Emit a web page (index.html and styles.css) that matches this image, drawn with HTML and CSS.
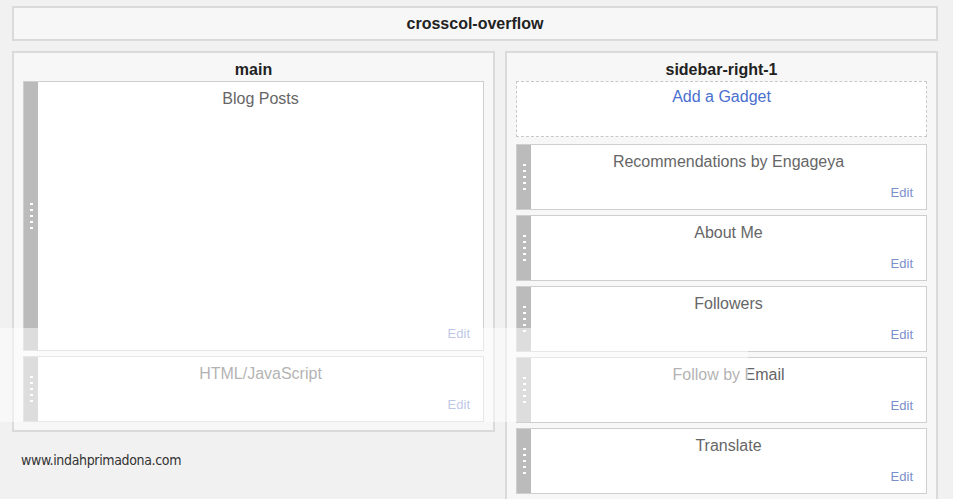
FILE: index.html
```html
<!DOCTYPE html>
<html>
<head>
<meta charset="utf-8">
<link rel="stylesheet" href="styles.css">
</head>
<body>
<div class="page">
  <div class="crosscol">crosscol-overflow</div>
  <div class="columns">
    <div class="col main-col">
      <div class="col-title">main</div>
      <div class="widgets">
        <div class="widget blog">
          <div class="handle"><span></span><span></span><span></span><span></span><span></span></div>
          <div class="body"><div class="wtitle">Blog Posts</div><div class="edit">Edit</div></div>
        </div>
        <div class="widget">
          <div class="handle"><span></span><span></span><span></span><span></span><span></span></div>
          <div class="body"><div class="wtitle">HTML/JavaScript</div><div class="edit">Edit</div></div>
        </div>
      </div>
      <div class="site">www.indahprimadona.com</div>
    </div>
    <div class="col side-col">
      <div class="col-title">sidebar-right-1</div>
      <div class="widgets">
        <div class="add">Add a Gadget</div>
        <div class="widget">
          <div class="handle"><span></span><span></span><span></span><span></span><span></span></div>
          <div class="body"><div class="wtitle">Recommendations by Engageya</div><div class="edit">Edit</div></div>
        </div>
        <div class="widget">
          <div class="handle"><span></span><span></span><span></span><span></span><span></span></div>
          <div class="body"><div class="wtitle">About Me</div><div class="edit">Edit</div></div>
        </div>
        <div class="widget">
          <div class="handle"><span></span><span></span><span></span><span></span><span></span></div>
          <div class="body"><div class="wtitle">Followers</div><div class="edit">Edit</div></div>
        </div>
        <div class="widget">
          <div class="handle"><span></span><span></span><span></span><span></span><span></span></div>
          <div class="body"><div class="wtitle">Follow by Email</div><div class="edit">Edit</div></div>
        </div>
        <div class="widget">
          <div class="handle"><span></span><span></span><span></span><span></span><span></span></div>
          <div class="body"><div class="wtitle">Translate</div><div class="edit">Edit</div></div>
        </div>
      </div>
    </div>
  </div>
  <div class="veil"></div>
</div>
</body>
</html>
```

FILE: styles.css
```css
html, body {
  margin: 0;
  padding: 0;
  background: #f1f1f1;
  font-family: "Liberation Sans", Arial, sans-serif;
  overflow: hidden;
}
.page {
  position: relative;
  width: 953px;
  height: 499px;
  padding: 6px 0 0 12px;
  box-sizing: border-box;
}
.crosscol {
  width: 926px;
  height: 35px;
  box-sizing: border-box;
  border: 2px solid #dadada;
  background: #f7f7f7;
  font-weight: bold;
  font-size: 16px;
  color: #222;
  text-align: center;
  line-height: 31px;
}
.columns {
  display: flex;
  gap: 10px;
  margin-top: 10px;
  align-items: flex-start;
}
.col {
  box-sizing: border-box;
  border: 2px solid #dadada;
  background: #f7f7f7;
}
.main-col {
  width: 483px;
  height: 381px;
  padding: 0 9px 10px;
  position: relative;
}
.side-col {
  width: 433px;
  height: 470px;
  padding: 0 9px;
}
.col-title {
  height: 28px;
  line-height: 34px;
  text-align: center;
  font-weight: bold;
  font-size: 16px;
  color: #222;
}
.widgets {
  display: flex;
  flex-direction: column;
  gap: 5px;
}
.widget {
  display: flex;
  height: 66px;
  box-sizing: border-box;
  border: 1px solid #cfcfcf;
  background: #fff;
}
.widget.blog {
  height: 270px;
}
.handle {
  width: 14px;
  background: #bbbbbb;
  display: flex;
  flex-direction: column;
  align-items: center;
  justify-content: center;
  gap: 4px;
}
.handle span {
  width: 3px;
  height: 2px;
  background: #fff;
}
.body {
  flex: 1;
  display: flex;
  flex-direction: column;
  justify-content: space-between;
  padding: 8px 13px 8px 0;
}
.wtitle {
  text-align: center;
  font-size: 16px;
  line-height: 18px;
  color: #666;
  padding-left: 13px;
}
.edit {
  text-align: right;
  font-size: 13px;
  line-height: 16px;
  color: #7a90cb;
}
.add {
  height: 56px;
  box-sizing: border-box;
  border: 1px dashed #c8c8c8;
  background: #fff;
  text-align: center;
  font-size: 16px;
  line-height: 18px;
  padding-top: 6px;
  color: #4a6fcf;
  margin-bottom: 2px;
}
.site {
  position: absolute;
  left: 7px;
  top: 399px;
  font-family: "DejaVu Sans Condensed", "DejaVu Sans", sans-serif;
  font-stretch: condensed;
  font-size: 14px;
  letter-spacing: -0.35px;
  color: #333;
  white-space: nowrap;
}
.veil {
  position: absolute;
  left: 0;
  top: 328px;
  width: 748px;
  height: 94px;
  background: rgba(255, 255, 255, 0.5);
  pointer-events: none;
}
```
